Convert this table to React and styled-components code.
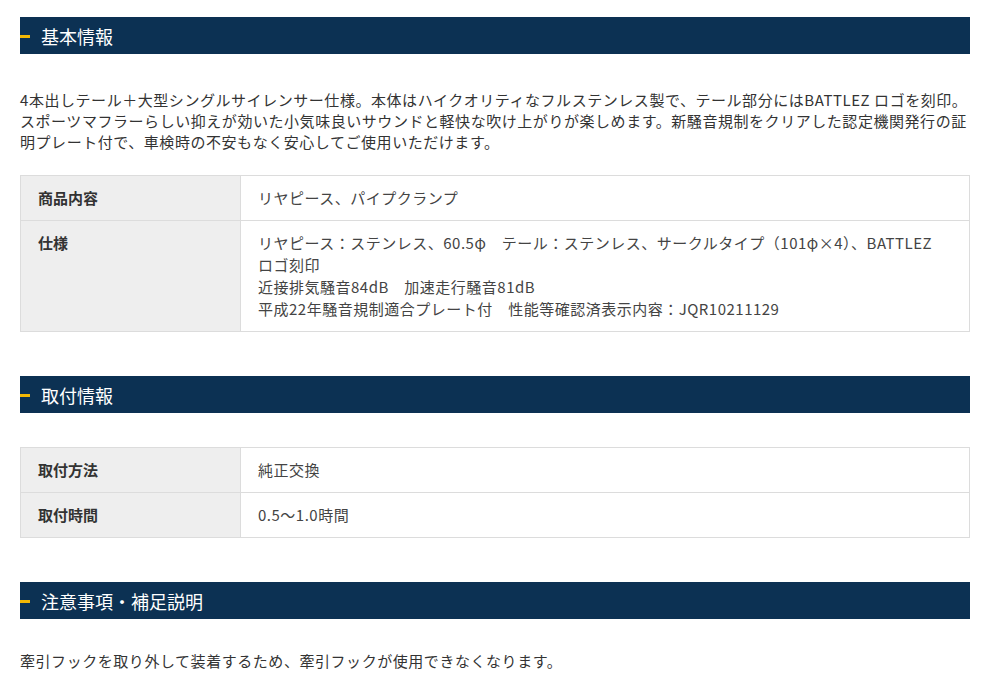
import React from 'react';
import styled, { createGlobalStyle } from 'styled-components';

const GlobalStyle = createGlobalStyle`
  body {
    margin: 0;
    background: #fff;
    font-family: "Noto Sans CJK JP", "Noto Sans", sans-serif;
    color: #333;
  }
`;

const specs = [
  {
    label: '商品内容',
    lines: ['リヤピース、パイプクランプ'],
  },
  {
    label: '仕様',
    lines: [
      'リヤピース：ステンレス、60.5φ　テール：ステンレス、サークルタイプ（101φ×4）、BATTLEZ',
      'ロゴ刻印',
      '近接排気騒音84dB　加速走行騒音81dB',
      '平成22年騒音規制適合プレート付　性能等確認済表示内容：JQR10211129',
    ],
  },
];

const install = [
  { label: '取付方法', lines: ['純正交換'] },
  { label: '取付時間', lines: ['0.5～1.0時間'] },
];

export default function App() {
  return (
    <>
      <GlobalStyle />
      <Page>
        <Section>
          <Heading>基本情報</Heading>
          <Text $top={35}>
            4本出しテール＋大型シングルサイレンサー仕様。本体はハイクオリティなフルステンレス製で、テール部分にはBATTLEZ ロゴを刻印。<br />
            スポーツマフラーらしい抑えが効いた小気味良いサウンドと軽快な吹け上がりが楽しめます。新騒音規制をクリアした認定機関発行の証<br />
            明プレート付で、車検時の不安もなく安心してご使用いただけます。
          </Text>
          <SpecTable $top={23} rows={specs} />
        </Section>

        <Section>
          <Heading>取付情報</Heading>
          <SpecTable $top={34} rows={install} />
        </Section>

        <Section>
          <Heading>注意事項・補足説明</Heading>
          <Text $top={31}>
            牽引フックを取り外して装着するため、牽引フックが使用できなくなります。
          </Text>
        </Section>
      </Page>
    </>
  );
}

function SpecTable({ rows, $top }) {
  return (
    <Table $top={$top}>
      {rows.map((row) => (
        <Row key={row.label}>
          <Label>{row.label}</Label>
          <Value>
            {row.lines.map((line, i) => (
              <div key={i}>{line}</div>
            ))}
          </Value>
        </Row>
      ))}
    </Table>
  );
}

const Page = styled.div`
  width: 950px;
  padding: 17px 0 0 20px;
  display: flex;
  flex-direction: column;
  gap: 44px;
`;

const Section = styled.section`
  display: flex;
  flex-direction: column;
`;

const Heading = styled.h2`
  position: relative;
  margin: 0;
  height: 37px;
  display: flex;
  align-items: center;
  padding-left: 21px;
  background: #0c3153;
  color: #fff;
  font-size: 18px;
  font-weight: 400;

  &::before {
    content: '';
    position: absolute;
    left: 0;
    top: 50%;
    width: 10px;
    height: 3px;
    margin-top: -1px;
    background: #f2b705;
  }
`;

const Text = styled.p`
  margin: ${(p) => p.$top}px 0 0;
  font-size: 15px;
  line-height: 21px;
  letter-spacing: 0.55px;
  color: #333;
`;

const Table = styled.div`
  margin-top: ${(p) => p.$top}px;
  border: 1px solid #dcdcdc;
  border-bottom: none;
  display: flex;
  flex-direction: column;
`;

const Row = styled.div`
  display: grid;
  grid-template-columns: 220px 1fr;
  border-bottom: 1px solid #dcdcdc;
`;

const Label = styled.div`
  background: #eeeeee;
  border-right: 1px solid #dcdcdc;
  padding: 11px 17px;
  font-size: 15px;
  line-height: 22px;
  font-weight: 700;
  color: #333;
`;

const Value = styled.div`
  padding: 11px 17px;
  font-size: 15px;
  line-height: 22px;
  color: #444;
  letter-spacing: 0.5px;
`;
